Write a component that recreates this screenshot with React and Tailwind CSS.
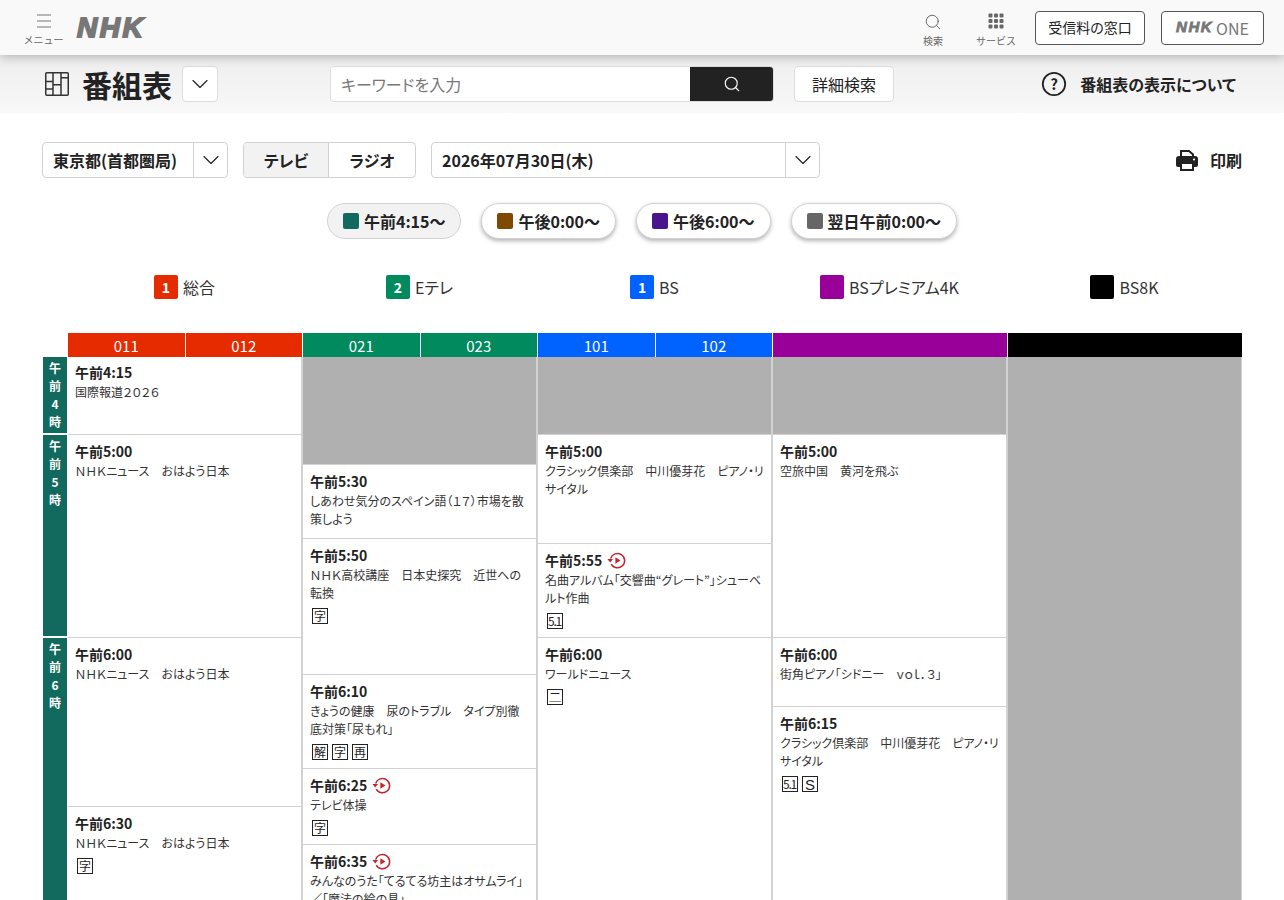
import { Search, ChevronDown } from "lucide-react";

function Logo({ className }) {
    return (
        <span className={`font-['Liberation_Sans'] italic font-bold text-[#777] ${className}`}>NHK</span>
    );
}

function Replay() {
    return (
        <svg width="19" height="19" viewBox="0 0 19 19" fill="none" className="ml-[5px] shrink-0">
            <path d="M3.6 7.4A7.2 7.2 0 1 1 4.2 13.2" stroke="#c4242c" strokeWidth="1.5" />
            <path d="M0.4 8h5.6L3.2 11.4z" fill="#c4242c" />
            <path d="M8.4 6.2l5 3.3-5 3.3z" fill="#c4242c" />
        </svg>
    );
}

function Badge({ children }) {
    return (
        <span className="relative w-4 h-4 border border-[#222] flex items-center justify-center text-[#222] leading-none">
            {children === "5.1" && <span className="text-[12px] tracking-[-1.2px] pr-[1px]">5.1</span>}
            {children === "S" && <span className="text-[15px] font-['Liberation_Sans']">S</span>}
            {children !== "5.1" && children !== "S" && <span className="text-[12px]">{children}</span>}
            {children === "二" && <span className="absolute bottom-[2px] left-[2px] right-[2px] h-px bg-[#888]" />}
        </span>
    );
}

function Program({ h, time, title, replay, badges, first }) {
    return (
        <div style={{ height: h }} className={`bg-white border-b border-[#d2d2d2] pl-[7px] pr-[6px] overflow-hidden shrink-0 ${first ? "pt-[5px]" : "pt-[6px]"}`}>
            <div className="flex items-center h-[20px] text-[14px] font-bold text-[#222]">
                {time}
                {replay && <Replay />}
            </div>
            <div className="text-[12px] leading-[18px] text-[#333] mt-[1px]">{title}</div>
            {badges && (
                <div className="flex gap-[4px] mt-[6px] ml-[2px]">
                    {badges.map((b) => <Badge key={b}>{b}</Badge>)}
                </div>
            )}
        </div>
    );
}

function Blank({ h }) {
    return <div style={{ height: h }} className="bg-[#b0b0b0] border-b border-[#d2d2d2] shrink-0" />;
}

function HourCell({ h, chars }) {
    return (
        <div style={{ height: h }} className="bg-[#126a5e] text-white text-[12px] font-bold flex flex-col items-center pt-[2px] leading-[18px] shrink-0 overflow-hidden">
            {chars.map((c, i) => <span key={i}>{c}</span>)}
        </div>
    );
}

function Pill({ color, label, active }) {
    return (
        <div className={`h-[36px] rounded-full border border-[#d2d2d2] flex items-center gap-[5px] px-[15px] text-[16px] font-bold text-[#222] ${active ? "bg-[#f2f2f2]" : "bg-white shadow-[0_2px_4px_rgba(0,0,0,0.3)]"}`}>
            <span className="w-4 h-4 rounded-[2px]" style={{ background: color }} />
            {label}
        </div>
    );
}

function Legend({ color, num, label }) {
    return (
        <div className="flex items-center justify-center gap-[5px] text-[16px] text-[#333]">
            <span className="w-6 h-6 rounded-[2px] text-white text-[14px] font-bold flex items-center justify-center" style={{ background: color }}>{num}</span>
            {label}
        </div>
    );
}

function ChannelHead({ color, nums }) {
    return (
        <div className="h-[24px] flex text-white text-[15px] mr-px" style={{ background: color }}>
            {nums.map((n) => (
                <div key={n} className="flex-1 text-center leading-[26px] first:border-r first:border-white last:border-0">{n}</div>
            ))}
        </div>
    );
}

export default function App() {
    return (
        <div className="h-screen overflow-hidden bg-white font-['Noto_Sans_CJK_JP',sans-serif] [font-feature-settings:'palt'] text-[#222]">
            {/* Global header */}
            <header className="h-[55px] bg-[#f9f9f9] shadow-[0_2px_10px_rgba(0,0,0,0.25)] relative z-10 flex items-center pl-[24px] pr-[20px]">
                <div className="flex flex-col items-center w-[39px] pt-[5px] text-[#666] [font-feature-settings:normal]">
                    <svg width="16" height="14" viewBox="0 0 16 14" fill="none" stroke="#777" strokeWidth="1.2">
                        <path d="M1 1h14M1 7h14M1 13h14" />
                    </svg>
                    <span className="text-[10px] leading-[14px] mt-[5px] whitespace-nowrap">メニュー</span>
                </div>
                <Logo className="ml-[14px] text-[28px] tracking-[2.5px] [-webkit-text-stroke:1.8px_#777]" />
                <div className="ml-auto flex items-center">
                    <div className="flex flex-col items-center pt-[5px] text-[#666] w-[24px] mr-[31px] [font-feature-settings:normal]">
                        <Search size={18} strokeWidth={1.3} />
                        <span className="text-[10px] leading-[14px] mt-[3px]">検索</span>
                    </div>
                    <div className="flex flex-col items-center pt-[5px] text-[#666] w-[40px] mr-[19px] [font-feature-settings:normal]">
                        <svg width="16" height="16" viewBox="0 0 16 16" fill="#666" className="mb-[1px]">
                            <rect x="0.5" y="0.5" width="4" height="4" rx="1" /><rect x="6" y="0.5" width="4" height="4" rx="1" /><rect x="11.5" y="0.5" width="4" height="4" rx="1" />
                            <rect x="0.5" y="6" width="4" height="4" rx="1" /><rect x="6" y="6" width="4" height="4" rx="1" /><rect x="11.5" y="6" width="4" height="4" rx="1" />
                            <rect x="0.5" y="11.5" width="4" height="4" rx="1" /><rect x="6" y="11.5" width="4" height="4" rx="1" /><rect x="11.5" y="11.5" width="4" height="4" rx="1" />
                        </svg>
                        <span className="text-[10px] leading-[14px] mt-[4px]">サービス</span>
                    </div>
                    <div className="w-[110px] h-[34px] bg-white border border-[#555] rounded-[4px] flex items-center justify-center text-[14px] text-[#222]">受信料の窓口</div>
                    <div className="ml-[16px] w-[103px] h-[34px] bg-white border border-[#555] rounded-[4px] flex items-center justify-center gap-[3px] text-[#777]">
                        <Logo className="text-[15px] tracking-[1.5px] [-webkit-text-stroke:0.8px_#777]" />
                        <span className="text-[16px]">ONE</span>
                    </div>
                </div>
            </header>

            {/* Page title bar */}
            <div className="h-[58px] bg-gradient-to-b from-[#eeeeee] to-[#f8f8f8] flex items-center pl-[45px] pr-[48px]">
                <svg width="24" height="24" viewBox="0 0 24 24" fill="none" stroke="#333" strokeWidth="1.5">
                    <rect x="0.75" y="0.75" width="22.5" height="22.5" rx="1" />
                    <path d="M8 0.75v22.5M16 0.75v22.5M0.75 9.6H8M0.75 17H8M8 12.7h8M16 5.8h7.25" />
                </svg>
                <h1 className="ml-[13px] text-[30px] font-bold text-[#222] leading-none">番組表</h1>
                <div className="ml-[10px] w-[36px] h-[36px] bg-white border border-[#ddd] rounded-[4px] flex items-center justify-center">
                    <ChevronDown size={28} strokeWidth={1} />
                </div>
                <div className="ml-[112px] w-[444px] h-[36px] flex rounded-[4px] overflow-hidden border border-[#ddd]">
                    <div className="flex-1 bg-white pl-[10px] text-[16px] leading-[34px] text-[#777]">キーワードを入力</div>
                    <div className="w-[83px] bg-[#222] flex items-center justify-center text-white">
                        <Search size={18} strokeWidth={1.5} />
                    </div>
                </div>
                <div className="ml-[20px] w-[100px] h-[36px] bg-white border border-[#ddd] rounded-[4px] flex items-center justify-center text-[16px]">詳細検索</div>
                <div className="ml-auto flex items-center gap-[13px]">
                    <svg width="26" height="26" viewBox="0 0 26 26" fill="none">
                        <circle cx="13" cy="13" r="11.2" stroke="#222" strokeWidth="1.8" />
                        <text x="13" y="18.5" textAnchor="middle" fontSize="15" fontWeight="700" fill="#222">?</text>
                    </svg>
                    <span className="text-[16px] font-bold">番組表の表示について</span>
                </div>
            </div>

            {/* Selectors */}
            <div className="pt-[29px] pl-[42px] pr-[42px] flex items-center">
                <div className="w-[186px] h-[36px] flex border border-[#d2d2d2] rounded-[4px]">
                    <div className="flex-1 pl-[10px] text-[16px] font-bold leading-[34px]">東京都(首都圏局)</div>
                    <div className="w-[34px] border-l border-[#d2d2d2] flex items-center justify-center"><ChevronDown size={28} strokeWidth={1} /></div>
                </div>
                <div className="ml-[15px] w-[173px] h-[36px] flex border border-[#d2d2d2] rounded-[4px] overflow-hidden text-[16px] font-bold">
                    <div className="w-[85px] bg-[#f2f2f2] border-r border-[#d2d2d2] flex items-center justify-center">テレビ</div>
                    <div className="flex-1 flex items-center justify-center">ラジオ</div>
                </div>
                <div className="ml-[15px] w-[389px] h-[36px] flex border border-[#d2d2d2] rounded-[4px]">
                    <div className="flex-1 pl-[10px] text-[16px] font-bold leading-[34px]">2026年07月30日(木)</div>
                    <div className="w-[34px] border-l border-[#d2d2d2] flex items-center justify-center"><ChevronDown size={28} strokeWidth={1} /></div>
                </div>
                <div className="ml-auto flex items-center gap-[12px] text-[16px] font-bold">
                    <svg width="22" height="22" viewBox="0 0 22 22">
                        <path d="M5 8V2h8l4 3.5V8" fill="none" stroke="#222" strokeWidth="2" />
                        <path d="M3 7h16a3 3 0 0 1 3 3v6a2 2 0 0 1-2 2H2a2 2 0 0 1-2-2v-6a3 3 0 0 1 3-3z" fill="#222" />
                        <rect x="5" y="14" width="12" height="7" fill="#fff" stroke="#222" strokeWidth="2" />
                        <circle cx="18" cy="10.5" r="1.1" fill="#fff" />
                    </svg>
                    印刷
                </div>
            </div>

            {/* Time jump */}
            <div className="mt-[25px] flex justify-center gap-[20px]">
                <Pill color="#126a5e" label="午前4:15〜" active />
                <Pill color="#7f4a00" label="午後0:00〜" />
                <Pill color="#4a148c" label="午後6:00〜" />
                <Pill color="#666666" label="翌日午前0:00〜" />
            </div>

            {/* Channel legend */}
            <div className="mt-[36px] ml-[67px] mr-[42px] grid grid-cols-5">
                <Legend color="#e62b00" num="1" label="総合" />
                <Legend color="#008a5e" num="2" label="Eテレ" />
                <Legend color="#0062ff" num="1" label="BS" />
                <Legend color="#990099" num="" label="BSプレミアム4K" />
                <Legend color="#000000" num="" label="BS8K" />
            </div>

            {/* Programme table */}
            <div className="mt-[34px] ml-[43px] grid grid-cols-[25px_repeat(4,235px)_234px]">
                <div />
                <ChannelHead color="#e62b00" nums={["011", "012"]} />
                <ChannelHead color="#008a5e" nums={["021", "023"]} />
                <ChannelHead color="#0062ff" nums={["101", "102"]} />
                <ChannelHead color="#990099" nums={[""]} />
                <div className="h-[24px] bg-black" />

                <div className="flex flex-col gap-[2px] mr-px">
                    <HourCell h={76} chars={["午", "前", "4", "時"]} />
                    <HourCell h={201} chars={["午", "前", "5", "時"]} />
                    <HourCell h={300} chars={["午", "前", "6", "時"]} />
                </div>

                <div className="flex flex-col border-r-2 border-[#d2d2d2]">
                    <Program first h={78} time="午前4:15" title="国際報道２０２６" />
                    <Program h={203} time="午前5:00" title="ＮＨＫニュース　おはよう日本" />
                    <Program h={169} time="午前6:00" title="ＮＨＫニュース　おはよう日本" />
                    <Program h={120} time="午前6:30" title="ＮＨＫニュース　おはよう日本" badges={["字"]} />
                </div>

                <div className="flex flex-col border-r-2 border-[#d2d2d2]">
                    <Blank h={108} />
                    <Program h={74} time="午前5:30" title="しあわせ気分のスペイン語（１７）市場を散策しよう" />
                    <Program h={136} time="午前5:50" title="ＮＨＫ高校講座　日本史探究　近世への転換" badges={["字"]} />
                    <Program h={94} time="午前6:10" title="きょうの健康　尿のトラブル　タイプ別徹底対策「尿もれ」" badges={["解", "字", "再"]} />
                    <Program h={76} time="午前6:25" replay title="テレビ体操" badges={["字"]} />
                    <Program h={80} time="午前6:35" replay title="みんなのうた「てるてる坊主はオサムライ」／「魔法の絵の具」" />
                </div>

                <div className="flex flex-col border-r-2 border-[#d2d2d2]">
                    <Blank h={78} />
                    <Program h={109} time="午前5:00" title="クラシック倶楽部　中川優芽花　ピアノ・リサイタル" />
                    <Program h={94} time="午前5:55" replay title="名曲アルバム「交響曲“グレート”」シューベルト作曲" badges={["5.1"]} />
                    <Program h={290} time="午前6:00" title="ワールドニュース" badges={["二"]} />
                </div>

                <div className="flex flex-col border-r-2 border-[#d2d2d2]">
                    <Blank h={78} />
                    <Program h={203} time="午前5:00" title="空旅中国　黄河を飛ぶ" />
                    <Program h={69} time="午前6:00" title="街角ピアノ「シドニー　ｖｏｌ．３」" />
                    <Program h={220} time="午前6:15" title="クラシック倶楽部　中川優芽花　ピアノ・リサイタル" badges={["5.1", "S"]} />
                </div>

                <div className="h-[570px] bg-[#b0b0b0] border-r border-[#d2d2d2]" />
            </div>
        </div>
    );
}
